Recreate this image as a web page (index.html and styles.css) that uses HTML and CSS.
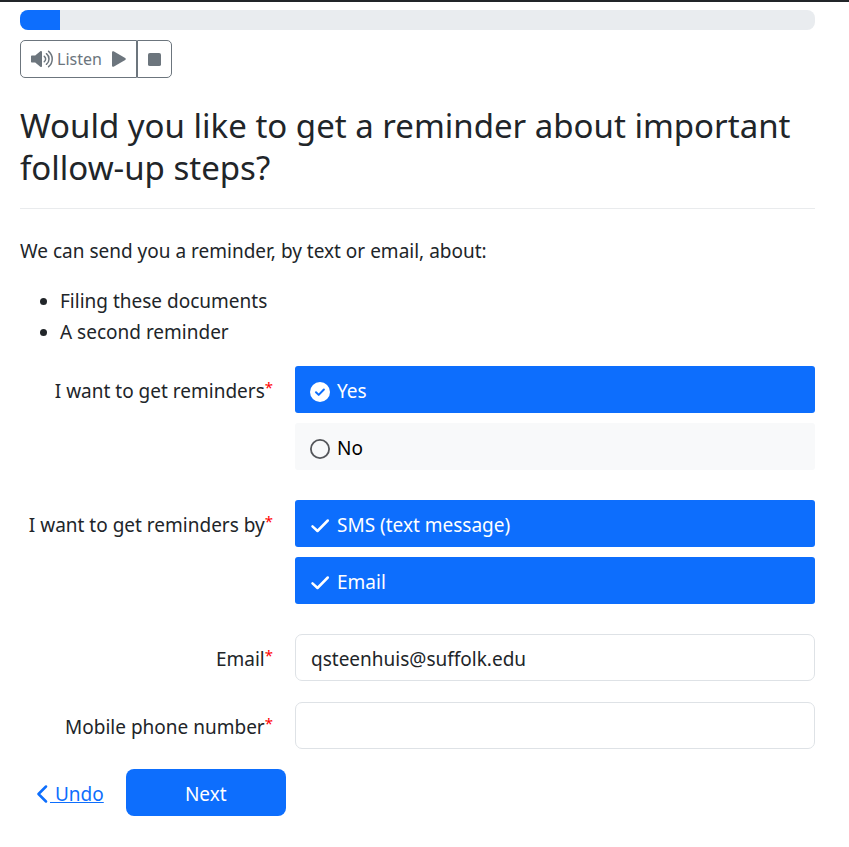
FILE: index.html
```html
<!DOCTYPE html>
<html lang="en">
<head>
<meta charset="utf-8">
<meta name="viewport" content="width=device-width, initial-scale=1">
<title>Reminders</title>
<link rel="stylesheet" href="styles.css">
</head>
<body>
<main class="page">
  <div class="progress" role="progressbar" aria-valuenow="5" aria-valuemin="0" aria-valuemax="100"><div class="progress-bar"></div></div>
  <div class="audio">
    <button type="button" class="audio-button">
      <svg class="icon-speaker" viewBox="0 0 22 18" aria-hidden="true"><path fill="currentColor" d="M1 5.500h3.200L9.300 1.300C10.100.6 11 1 11 2v14c0 1-.9 1.400-1.700.7L4.200 12.500H1c-.6 0-1-.4-1-1v-5c0-.6.4-1 1-1z"/><path class="stroke" stroke-width="1.500" d="M13.300 6.300a3.400 3.400 0 0 1 0 5.400M15.400 3.700a6.700 6.700 0 0 1 0 10.600M17.600 1.300a10 10 0 0 1 0 15.400"/></svg>
      <span class="audio-text">Listen</span>
      <svg class="icon-play" viewBox="0 0 14 16" aria-hidden="true"><path fill="currentColor" d="M0 1.500C0 .4 1 0 2 .5L13.200 7c.8.500.8 1.500 0 2L2 15.500c-1 .5-2 .1-2-1z"/></svg>
    </button>
    <button type="button" class="audio-button" aria-label="Stop">
      <svg class="icon-stop" viewBox="0 0 14 14" aria-hidden="true"><rect width="14" height="14" rx="2" fill="currentColor"/></svg>
    </button>
  </div>
  <h1 class="title">Would you like to get a reminder about important follow-up steps?</h1>
  <p class="intro">We can send you a reminder, by text or email, about:</p>
  <ul class="topics">
    <li>Filing these documents</li>
    <li>A second reminder</li>
  </ul>
  <form class="form">
    <div class="row row-choices" role="radiogroup" aria-labelledby="want">
      <span class="label" id="want">I want to get reminders<span class="required">*</span></span>
      <div class="choices">
        <label class="choice choice-on"><input class="choice-input" type="radio" name="want" checked>
          <svg class="icon-choice" viewBox="0 0 20 20" aria-hidden="true"><circle cx="10" cy="10" r="10" fill="currentColor"/><path class="check-cut" d="M6 10.300l2.700 2.600 5.200-5.400"/></svg>
          <span>Yes</span></label>
        <label class="choice"><input class="choice-input" type="radio" name="want">
          <svg class="icon-choice icon-empty" viewBox="0 0 20 20" aria-hidden="true"><circle class="stroke" stroke-width="1.800" cx="10" cy="10" r="9.100"/></svg>
          <span>No</span></label>
      </div>
    </div>
    <div class="row row-choices" role="group" aria-labelledby="by">
      <span class="label" id="by">I want to get reminders by<span class="required">*</span></span>
      <div class="choices">
        <label class="choice choice-on"><input class="choice-input" type="checkbox" checked>
          <svg class="icon-choice" viewBox="0 0 20 20" aria-hidden="true"><path class="stroke" stroke-width="2.500" d="M2.500 10.300l5 4.700L17.800 4.500"/></svg>
          <span>SMS (text message)</span></label>
        <label class="choice choice-on"><input class="choice-input" type="checkbox" checked>
          <svg class="icon-choice" viewBox="0 0 20 20" aria-hidden="true"><path class="stroke" stroke-width="2.500" d="M2.500 10.300l5 4.700L17.800 4.500"/></svg>
          <span>Email</span></label>
      </div>
    </div>
    <div class="row">
      <label class="label" for="email">Email<span class="required">*</span></label>
      <input class="field" id="email" type="email" value="qsteenhuis@suffolk.edu">
    </div>
    <div class="row">
      <label class="label" for="phone">Mobile phone number<span class="required">*</span></label>
      <input class="field" id="phone" type="tel">
    </div>
    <div class="actions">
      <a class="undo" href="#"><svg class="icon-back" viewBox="0 0 14 18" aria-hidden="true"><path class="stroke" stroke-width="2.500" d="M10 1.500L2.500 9l7.500 7.500"/></svg><span class="undo-text">&nbsp;Undo</span></a>
      <button type="submit" class="next">Next</button>
    </div>
  </form>
</main>
</body>
</html>
```
FILE: styles.css
```css
* {
  box-sizing: border-box;
}

body {
  margin: 0;
  border-top: 2px solid #212529;
  background: #fff;
  color: #212529;
  font-family: "Noto Sans", "Open Sans", sans-serif;
  font-size: 19px;
  line-height: 31px;
}

button,
input {
  font: inherit;
}

svg {
  display: block;
  flex: none;
}

.stroke {
  fill: none;
  stroke: currentColor;
  stroke-linecap: round;
  stroke-linejoin: round;
}

.page {
  padding: 8px 34px 30px 20px;
}

.progress {
  height: 20px;
  border-radius: 8px;
  background: #e9ecef;
  overflow: hidden;
}

.progress-bar {
  width: 5%;
  height: 100%;
  background: #0d6efd;
}

.audio {
  display: flex;
  margin-top: 10px;
}

.audio-button {
  display: flex;
  align-items: center;
  height: 38px;
  padding: 0 10px;
  border: 1px solid #6c757d;
  border-radius: 5px 0 0 5px;
  background: #fff;
  color: #6c757d;
  font-size: 16px;
}

.audio-button + .audio-button {
  border-radius: 0 5px 5px 0;
}

.audio-text {
  margin: 0 10px 0 4px;
}

.icon-speaker {
  width: 22px;
  height: 18px;
}

.icon-play {
  width: 14px;
  height: 16px;
}

.icon-stop {
  width: 13px;
  height: 13px;
}

.title {
  margin: 27px 0 0;
  padding-bottom: 19px;
  border-bottom: 1px solid #e9ebed;
  font-size: 33px;
  font-weight: 400;
  line-height: 42px;
}

.intro {
  margin: 27px 0 19px;
}

.topics {
  margin: 0 0 18px;
  padding-left: 40px;
}

.row {
  display: grid;
  grid-template-columns: minmax(0, 253fr) minmax(0, 520fr);
  column-gap: 22px;
  margin-bottom: 21px;
}

.row-choices {
  margin-bottom: 30px;
}

.label {
  padding-top: 10px;
  text-align: right;
}

.required {
  color: #f00;
  font-size: 15px;
  line-height: 1;
  vertical-align: 5px;
}

.choices {
  display: grid;
  gap: 10px;
}

.choice {
  position: relative;
  display: flex;
  align-items: center;
  gap: 7px;
  padding: 10px 15px 6px;
  border-radius: 3px;
  background: #f8f9fa;
  color: #000;
}

.choice-on {
  background: #0d6efd;
  color: #fff;
}

.choice-input {
  position: absolute;
  inset: 0;
  width: 100%;
  height: 100%;
  margin: 0;
  opacity: 0;
}

.icon-choice {
  width: 20px;
  height: 20px;
}

.icon-empty {
  color: #54565a;
}

.check-cut {
  fill: none;
  stroke: #0d6efd;
  stroke-width: 2;
  stroke-linecap: round;
  stroke-linejoin: round;
}

.field {
  width: 100%;
  height: 47px;
  padding: 2px 15px 0;
  border: 1px solid #dee2e6;
  border-radius: 7px;
  background: #fff;
  color: #212529;
}

.actions {
  display: flex;
  align-items: center;
  gap: 22px;
  margin-top: -1px;
  padding-left: 16px;
}

.undo {
  display: flex;
  align-items: center;
  padding-top: 3px;
  color: #0d6efd;
  text-decoration: none;
}

.undo-text {
  text-decoration: underline;
}

.icon-back {
  width: 14px;
  height: 18px;
}

.next {
  width: 160px;
  height: 47px;
  padding: 3px 0 0;
  border: 0;
  border-radius: 8px;
  background: #0d6efd;
  color: #fff;
}
```
